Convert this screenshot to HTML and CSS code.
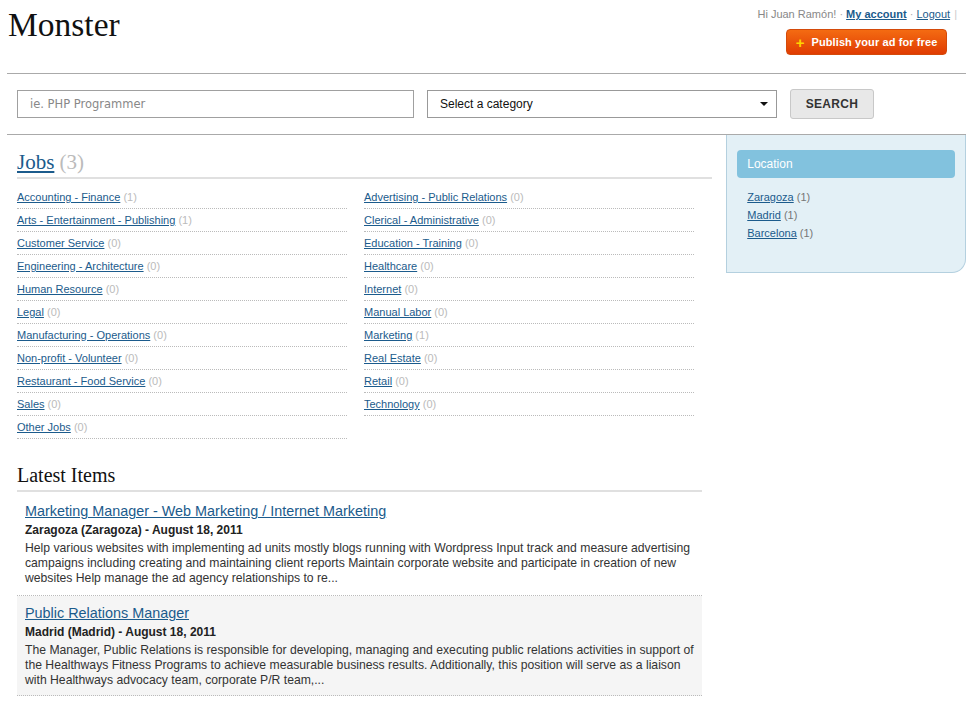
FILE: index.html
```html
<!DOCTYPE html>
<html>
<head>
<meta charset="utf-8">
<title>Monster</title>
<link rel="stylesheet" href="styles.css">
</head>
<body>
<div class="page">
  <header class="header">
    <h1 class="logo">Monster</h1>
    <div class="header-right">
      <div class="userbar">Hi Juan Ramón! <span class="dot">·</span> <a href="#" class="strong">My account</a> <span class="dot">·</span> <a href="#">Logout</a> <span class="pipe">|</span></div>
      <a href="#" class="publish"><span class="plus">+</span>Publish your ad for free</a>
    </div>
  </header>

  <form class="search">
    <input class="search-input" type="text" placeholder="ie. PHP Programmer">
    <div class="select"><span>Select a category</span><span class="caret"></span></div>
    <button class="search-btn" type="button">SEARCH</button>
  </form>

  <div class="main">
    <div class="content">
      <section class="jobs">
        <h2 class="section-title"><a href="#">Jobs</a> <span class="count">(3)</span></h2>
        <div class="cats">
          <ul class="cat-col">
            <li><a href="#">Accounting - Finance</a> <span class="n">(1)</span></li>
            <li><a href="#">Arts - Entertainment - Publishing</a> <span class="n">(1)</span></li>
            <li><a href="#">Customer Service</a> <span class="n">(0)</span></li>
            <li><a href="#">Engineering - Architecture</a> <span class="n">(0)</span></li>
            <li><a href="#">Human Resource</a> <span class="n">(0)</span></li>
            <li><a href="#">Legal</a> <span class="n">(0)</span></li>
            <li><a href="#">Manufacturing - Operations</a> <span class="n">(0)</span></li>
            <li><a href="#">Non-profit - Volunteer</a> <span class="n">(0)</span></li>
            <li><a href="#">Restaurant - Food Service</a> <span class="n">(0)</span></li>
            <li><a href="#">Sales</a> <span class="n">(0)</span></li>
            <li><a href="#">Other Jobs</a> <span class="n">(0)</span></li>
          </ul>
          <ul class="cat-col">
            <li><a href="#">Advertising - Public Relations</a> <span class="n">(0)</span></li>
            <li><a href="#">Clerical - Administrative</a> <span class="n">(0)</span></li>
            <li><a href="#">Education - Training</a> <span class="n">(0)</span></li>
            <li><a href="#">Healthcare</a> <span class="n">(0)</span></li>
            <li><a href="#">Internet</a> <span class="n">(0)</span></li>
            <li><a href="#">Manual Labor</a> <span class="n">(0)</span></li>
            <li><a href="#">Marketing</a> <span class="n">(1)</span></li>
            <li><a href="#">Real Estate</a> <span class="n">(0)</span></li>
            <li><a href="#">Retail</a> <span class="n">(0)</span></li>
            <li><a href="#">Technology</a> <span class="n">(0)</span></li>
          </ul>
        </div>
      </section>

      <section class="latest">
        <h2 class="latest-title">Latest Items</h2>
        <div class="item">
          <a href="#" class="item-title">Marketing Manager - Web Marketing / Internet Marketing</a>
          <div class="item-meta">Zaragoza (Zaragoza) - August 18, 2011</div>
          <p class="item-desc">Help various websites with implementing ad units mostly blogs running with Wordpress Input track and measure advertising campaigns including creating and maintaining client reports Maintain corporate website and participate in creation of new websites Help manage the ad agency relationships to re...</p>
        </div>
        <div class="item alt">
          <a href="#" class="item-title">Public Relations Manager</a>
          <div class="item-meta">Madrid (Madrid) - August 18, 2011</div>
          <p class="item-desc">The Manager, Public Relations is responsible for developing, managing and executing public relations activities in support of the Healthways Fitness Programs to achieve measurable business results. Additionally, this position will serve as a liaison with Healthways advocacy team, corporate P/R team,...</p>
        </div>
      </section>
    </div>

    <aside class="sidebar">
      <div class="side-head">Location</div>
      <ul class="side-list">
        <li><a href="#">Zaragoza</a> <span class="n2">(1)</span></li>
        <li><a href="#">Madrid</a> <span class="n2">(1)</span></li>
        <li><a href="#">Barcelona</a> <span class="n2">(1)</span></li>
      </ul>
    </aside>
  </div>
</div>
</body>
</html>
```

FILE: styles.css
```css
* { box-sizing: border-box; }
html, body { margin: 0; padding: 0; background: #fff; }
body { font-family: "Liberation Sans", Arial, sans-serif; color: #333; }
a { color: #1b5b8c; }
ul { list-style: none; margin: 0; padding: 0; }

.page { width: 959px; margin-left: 7px; }

.header {
  display: flex;
  justify-content: space-between;
  height: 74px;
  border-bottom: 1px solid #aaa;
}
.logo {
  margin: 0;
  padding: 7px 0 0 1px;
  font-family: "Liberation Serif", Georgia, serif;
  font-weight: normal;
  font-size: 33.5px;
  line-height: 36px;
  color: #111;
}
.header-right {
  display: flex;
  flex-direction: column;
  align-items: flex-end;
  padding-top: 7px;
}
.userbar {
  font-size: 11px;
  line-height: 14px;
  color: #888;
  padding-right: 9px;
}
.userbar a { color: #1b5b8c; }
.userbar .strong { font-weight: bold; }
.userbar .dot { color: #aaa; }
.userbar .pipe { color: #ccc; margin-left: 1px; }
.publish {
  margin-top: 8px;
  margin-right: 19px;
  width: 161px;
  height: 26px;
  display: flex;
  align-items: center;
  justify-content: center;
  background: linear-gradient(#f46b12, #e03c02);
  border: 1px solid #d44a0a;
  border-radius: 4px;
  color: #fff;
  font-size: 11px;
  font-weight: bold;
  text-decoration: none;
  letter-spacing: 0.1px;
}
.publish .plus { color: #ffd400; font-size: 15px; margin-right: 7px; font-weight: bold; line-height: 1; }

.search {
  display: flex;
  align-items: center;
  margin: 0;
  padding: 15px 10px 15px;
  border-bottom: 1px solid #aaa;
}
.search-input {
  width: 397px;
  height: 28px;
  border: 1px solid #a0a0a0;
  padding: 0 12px;
  font-family: "DejaVu Sans", Verdana, sans-serif;
  font-size: 11.5px;
  color: #333;
  outline: none;
}
.search-input::placeholder { color: #888; }
.select {
  width: 350px;
  height: 28px;
  margin-left: 13px;
  border: 1px solid #999;
  display: flex;
  align-items: center;
  justify-content: space-between;
  padding: 0 8px 0 12px;
  font-size: 12px;
  color: #111;
}
.caret {
  width: 0; height: 0;
  border-left: 4px solid transparent;
  border-right: 4px solid transparent;
  border-top: 4px solid #111;
}
.search-btn {
  margin-left: 13px;
  width: 84px;
  height: 30px;
  background: #e8e8e8;
  border: 1px solid #c8c8c8;
  border-radius: 3px;
  font-family: "Liberation Sans", Arial, sans-serif;
  font-size: 12px;
  font-weight: bold;
  color: #333;
  letter-spacing: 0.3px;
}

.main { display: flex; align-items: flex-start; }
.content { width: 720px; padding-left: 10px; }

.jobs { width: 695px; }
.section-title {
  margin: 0;
  padding-top: 12px;
  font-family: "Liberation Serif", Georgia, serif;
  font-weight: normal;
  font-size: 21px;
  line-height: 30px;
  border-bottom: 2px solid #e0e0e0;
}
.section-title a { color: #1b5b8c; }
.section-title .count { color: #bbb; }

.cats { display: flex; gap: 17px; margin-top: 7px; }
.cat-col { width: 330px; }
.cat-col li {
  height: 23px;
  line-height: 22px;
  font-size: 11px;
  border-bottom: 1px dotted #bbb;
}
.cat-col .n { color: #bbb; }

.latest { width: 685px; margin-top: 21px; }
.latest-title {
  margin: 0;
  font-family: "Liberation Serif", Georgia, serif;
  font-weight: normal;
  font-size: 20px;
  line-height: 30px;
  color: #111;
  border-bottom: 2px solid #e0e0e0;
}
.item {
  padding: 10px 8px 9px;
  border-bottom: 1px dotted #bbb;
}
.item.alt { background: #f5f5f5; padding-top: 8px; padding-bottom: 7px; }
.item-title {
  display: block;
  font-size: 14.4px;
  line-height: 18px;
  color: #1b5b8c;
}
.item-meta {
  margin-top: 1px;
  font-size: 12px;
  font-weight: bold;
  line-height: 18px;
  color: #222;
}
.item-desc {
  margin: 2px 0 0;
  font-size: 12.2px;
  line-height: 15px;
  color: #333;
}

.sidebar {
  width: 240px;
  height: 138px;
  background: #e3f0f6;
  border: 1px solid #b4d0df;
  border-top: none;
  border-bottom-right-radius: 14px;
  padding: 15px 10px 0;
}
.side-head {
  height: 28px;
  line-height: 28px;
  background: #82c2de;
  border-radius: 4px;
  color: #fff;
  font-size: 12px;
  padding-left: 10px;
}
.side-list { margin-top: 10px; padding-left: 10px; }
.side-list li { font-size: 11px; line-height: 18px; }
.side-list .n2 { color: #777; }
```
